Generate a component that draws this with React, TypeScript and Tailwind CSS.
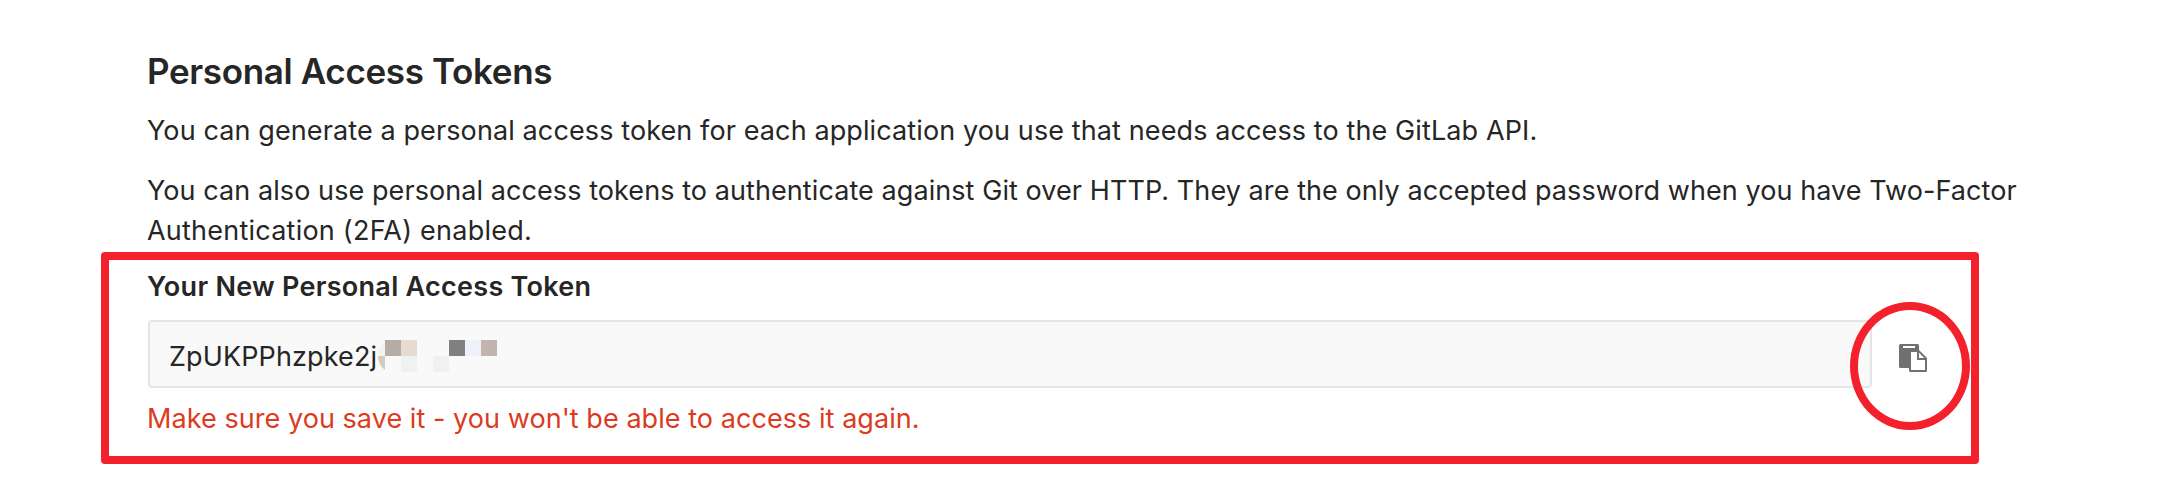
import React from "react";

type Cell = { x: number; y: number; fill: string };

const CELLS: Cell[] = [
  { x: 7, y: 0, fill: "#b6aca4" },
  { x: 23, y: 0, fill: "#e5dccf" },
  { x: 71, y: 0, fill: "#808080" },
  { x: 87, y: 0, fill: "#ecf2f7" },
  { x: 103, y: 0, fill: "#c3b5ad" },
  { x: 23, y: 16, fill: "#f0f1f3" },
  { x: 55, y: 16, fill: "#f0f1f3" },
];

function MaskedToken() {
  return (
    <svg width="120" height="32" viewBox="0 0 120 32" className="mt-[18px] shrink-0" shapeRendering="crispEdges">
      <path d="M7 0C3 3 0 9 0 16H7Z" fill="#f0f5f2" />
      <path d="M0 16H7V30C3 27 0 22 0 16Z" fill="#d5cabf" shapeRendering="auto" />
      {CELLS.map((c) => (
        <rect key={`${c.x}-${c.y}`} x={c.x} y={c.y} width="16" height="16" fill={c.fill} />
      ))}
    </svg>
  );
}

function PasteIcon() {
  return (
    <svg width="28" height="28" viewBox="0 0 28 28" fill="#707070">
      <path d="M1.5 0h17A1.5 1.5 0 0 1 20 1.500V6l8 8v12.500a1.500 1.500 0 0 1-1.500 1.500h-15A1.500 1.500 0 0 1 10 26.500V24H1.500A1.500 1.500 0 0 1 0 22.500v-21A1.500 1.500 0 0 1 1.500 0Z" />
      <path d="M4 2h12v2H4zM12 8h6v8h8v10H12zM20 8.700V14h5.300z" fill="#fff" />
    </svg>
  );
}

export default function App() {
  return (
    <main className="relative h-[484px] w-[2182px] overflow-hidden bg-white pt-[51px] pl-[147px] font-['Inter',sans-serif] text-[27px] leading-10 text-[#262626]">
      <h1 className="text-[35px] leading-10 font-semibold tracking-[-0.35px] whitespace-nowrap">Personal Access Tokens</h1>
      <p className="mt-5 tracking-[0.11px] whitespace-nowrap">
        You can generate a personal access token for each application you use that needs access to the GitLab API.
      </p>
      <p className="mt-5 whitespace-nowrap">
        <span className="block tracking-[0.076px]">
          You can also use personal access tokens to authenticate against Git over HTTP. They are the only accepted password when you have Two-Factor
        </span>
        <span className="block tracking-[0.23px]">Authentication (2FA) enabled.</span>
      </p>
      <h2 className="mt-4 font-semibold tracking-[0.27px] whitespace-nowrap">Your New Personal Access Token</h2>
      <div className="mt-[13px] ml-[1px] flex h-[68px]">
        <div className="flex w-[1724px] rounded-[4px] border-2 border-[#e5e5e5] bg-[#f9f9f9] pl-[19px]">
          <span className="mt-[15px] w-[209px] tracking-[0.12px] whitespace-nowrap">ZpUKPPhzpke2j</span>
          <MaskedToken />
        </div>
        <button type="button" aria-label="Copy token" className="flex w-[82px] items-start pt-6 pl-[27px]">
          <PasteIcon />
        </button>
      </div>
      <p className="mt-[11px] tracking-[0.057px] whitespace-nowrap text-[#db3b21]">Make sure you save it - you won't be able to access it again.</p>
      <div className="absolute top-[252px] left-[101px] h-[212px] w-[1878px] rounded-[4px] border-8 border-[#f2212b]" />
      <div className="absolute top-[302px] left-[1850px] h-[128px] w-[120px] rounded-[50%] border-8 border-[#f2212b]" />
    </main>
  );
}
